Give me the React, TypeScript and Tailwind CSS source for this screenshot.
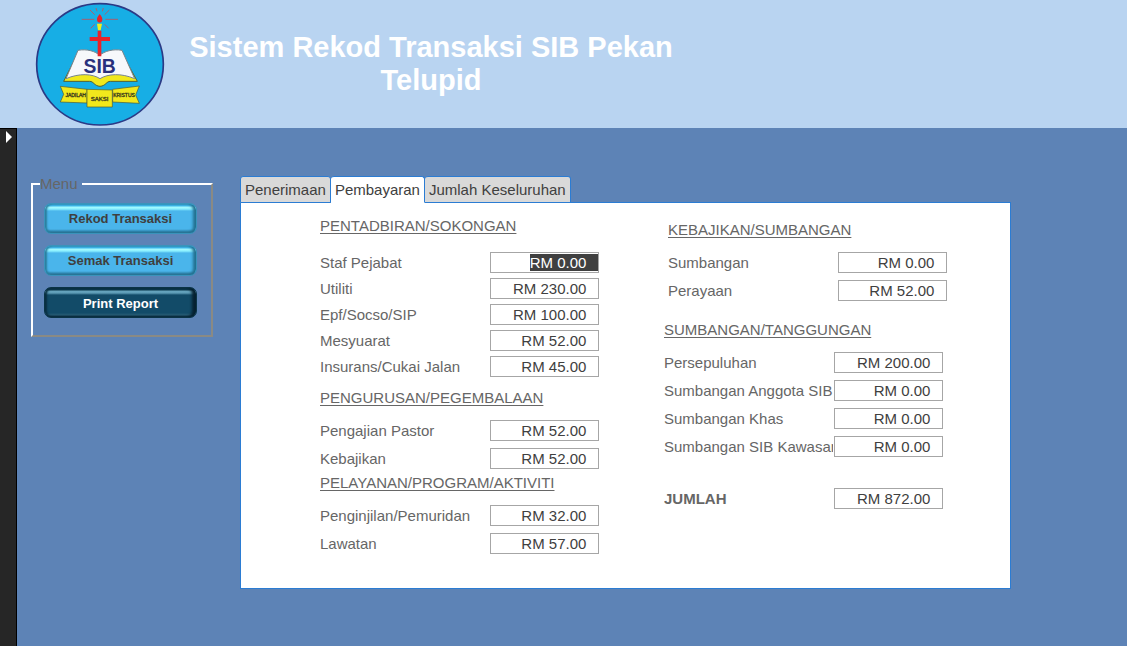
import { useEffect, useRef, useState } from "react";

type Entry = { id: string; label: string; amount: number };
type Group = { title: string; entries: Entry[]; className: string; rowsClassName: string };

// Amounts keep trailing blanks where a closing bracket would go for negatives.
const formatAmount = (value: number) => `RM ${value.toFixed(2)}\u2002\u00a0`;

const leftGroups: Group[] = [
  {
    title: "PENTADBIRAN/SOKONGAN",
    className: "",
    rowsClassName: "mt-[18px] gap-[5px]",
    entries: [
      { id: "staf-pejabat", label: "Staf Pejabat", amount: 0 },
      { id: "utiliti", label: "Utiliti", amount: 230 },
      { id: "epf", label: "Epf/Socso/SIP", amount: 100 },
      { id: "mesyuarat", label: "Mesyuarat", amount: 52 },
      { id: "insurans", label: "Insurans/Cukai Jalan", amount: 45 },
    ],
  },
  {
    title: "PENGURUSAN/PEGEMBALAAN",
    className: "mt-3",
    rowsClassName: "mt-[14px] gap-[7px]",
    entries: [
      { id: "pengajian", label: "Pengajian Pastor", amount: 52 },
      { id: "kebajikan", label: "Kebajikan", amount: 52 },
    ],
  },
  {
    title: "PELAYANAN/PROGRAM/AKTIVITI",
    className: "mt-[5px]",
    rowsClassName: "mt-[14px] gap-[7px]",
    entries: [
      { id: "penginjilan", label: "Penginjilan/Pemuridan", amount: 32 },
      { id: "lawatan", label: "Lawatan", amount: 57 },
    ],
  },
];

const rightGroups: Group[] = [
  {
    title: "KEBAJIKAN/SUMBANGAN",
    className: "pl-1",
    rowsClassName: "mt-[14px] gap-[7px]",
    entries: [
      { id: "sumbangan", label: "Sumbangan", amount: 0 },
      { id: "perayaan", label: "Perayaan", amount: 52 },
    ],
  },
  {
    title: "SUMBANGAN/TANGGUNGAN",
    className: "mt-5",
    rowsClassName: "mt-[14px] gap-[7px]",
    entries: [
      { id: "persepuluhan", label: "Persepuluhan", amount: 200 },
      { id: "anggota", label: "Sumbangan Anggota SIB", amount: 0 },
      { id: "khas", label: "Sumbangan Khas", amount: 0 },
      { id: "kawasan", label: "Sumbangan SIB Kawasan", amount: 0 },
    ],
  },
];

function Logo() {
  return (
    <svg viewBox="15 0 390 384" className="h-32 w-[130px] shrink-0" role="img" aria-label="SIB">
      <ellipse cx="210" cy="193" rx="190" ry="182" fill="#17aee5" stroke="#2b3a86" strokeWidth="5" />
      <g stroke="#a8606f" strokeWidth="3">
        <path d="M155 58h38M226 58h38M180 30l14 14M238 30l-14 14M182 85l12-12M236 85l-12-12M198 24l3 10M220 24l-3 10" />
      </g>
      <path d="M209 42c7 8 10 15 7 22-3 5-11 5-14 0-3-7 0-14 7-22z" fill="#e8232a" />
      <path d="M201 71h15l-4 20h-8z" fill="#f3ee1c" />
      <path d="M136 175L101 244h78c12 0 14 14 31 15 17-1 19-15 31-15h81l-38-69z" fill="#f1e81c" stroke="#53602f" strokeWidth="3" />
      <path d="M144 151L108 236c40-17 79-15 102 0 24-15 64-17 104 0l-38-85c-28-5-53 3-67 15-13-12-37-20-65-15z" fill="#f7f8fb" stroke="#77848c" strokeWidth="3" />
      <path d="M203 92h11v19h26v12h-26v46h-11v-46h-24v-12h24z" fill="#e8232a" />
      <text x="209" y="220" textAnchor="middle" fontSize="58" fontWeight="700" fill="#29307c" fontFamily="Liberation Sans, sans-serif">SIB</text>
      <g fill="#f1e81c" stroke="#4b5734" strokeWidth="2">
        <path d="M91 259l80 9v41l-80-3 10-23z" />
        <path d="M328 258l-80 10v38l80 4-11-25z" />
        <path d="M171 268l76 2v51h-76z" />
      </g>
      <g fill="#3a3a1c" stroke="#3a3a1c" fontFamily="Liberation Sans, sans-serif" textAnchor="middle">
        <text x="137" y="290" fontSize="15">JADILAH</text>
        <text x="209" y="302" fontSize="18">SAKSI</text>
        <text x="282" y="290" fontSize="15">KRISTUS</text>
      </g>
    </svg>
  );
}

const lightButton =
  "border-[#3a93bb] bg-[linear-gradient(#41bdf3_0,#41bdf3_2px,#a9fbff_3px,#8af0ff_5px,#4ab5eb_7px,#4ab5eb_25px,#2c7ba0_28px,#2a6e90_100%)] text-[#3f3f3f] shadow-[inset_2px_0_2px_#2b7f9d,inset_-3px_0_3px_#22708f]";
const darkButton =
  "border-[#0a3346] pt-[3px] bg-[linear-gradient(#0d3a50_0,#0d3a50_2px,#67a5be_3px,#5d9bb5_5px,#124b68_7px,#124b68_25px,#2a5f78_27px,#07293a_29px,#07293a_100%)] text-white shadow-[inset_2px_0_2px_#0a2e40,inset_-4px_0_3px_#062130]";

function MenuButton({ label, dark }: { label: string; dark?: boolean }) {
  return (
    <button
      type="button"
      className={`h-[31px] w-full rounded-[7px] border text-[13px] leading-4 font-bold ${dark ? darkButton : lightButton}`}
    >
      {label}
    </button>
  );
}

function Row({ entry, bold, selected }: { entry: Entry; bold?: boolean; selected?: boolean }) {
  const ref = useRef<HTMLInputElement>(null);
  useEffect(() => {
    if (selected) {
      ref.current?.focus();
      ref.current?.select();
    }
  }, [selected]);
  return (
    <div className="flex h-[21px] items-center">
      <label
        htmlFor={entry.id}
        className={`mr-px w-[169px] shrink-0 overflow-hidden whitespace-nowrap text-[#666] ${bold ? "font-bold" : ""}`}
      >
        {entry.label}
      </label>
      <input
        ref={ref}
        id={entry.id}
        type="text"
        defaultValue={formatAmount(entry.amount)}
        className="h-[21px] w-[109px] border border-[#a6a6a6] bg-white text-right text-[#404040] outline-none selection:bg-[#404040] selection:text-white"
      />
    </div>
  );
}

function Section({ group, selectedId }: { group: Group; selectedId?: string }) {
  return (
    <section className={group.className}>
      <h2 className="text-[#666] underline underline-offset-2">{group.title}</h2>
      <div className={`flex flex-col ${group.rowsClassName}`}>
        {group.entries.map((entry) => (
          <Row key={entry.id} entry={entry} selected={entry.id === selectedId} />
        ))}
      </div>
    </section>
  );
}

const tabs = ["Penerimaan", "Pembayaran", "Jumlah Keseluruhan"];

export default function App() {
  const [active, setActive] = useState("Pembayaran");
  return (
    <div className="flex min-h-screen flex-col bg-[#5d83b6] font-['Liberation_Sans',Arial,sans-serif] text-[15px] leading-[17px]">
      <header className="flex h-32 items-center bg-[#b9d4f1] pl-[35px]">
        <Logo />
        <h1 className="ml-2 max-w-[520px] pr-1 text-center text-[29px] leading-[33px] font-bold text-white">
          Sistem Rekod Transaksi SIB Pekan Telupid
        </h1>
      </header>

      <div className="flex grow">
        <div className="w-[17px] shrink-0 border-t border-r border-black bg-[#262626] pt-[2px] pl-[6px]">
          <svg viewBox="0 0 6 12" className="h-3 w-[6px]" aria-hidden="true">
            <path d="M0 0l6 6-6 6z" fill="#fff" />
          </svg>
        </div>

        <main className="flex grow items-start gap-[27px] pt-12 pr-[116px] pb-14 pl-[14px]">
          <fieldset className="w-[182px] shrink-0 border-2 border-t-white border-r-[#8a8a84] border-b-[#8a8a84] border-l-white pt-[11px] pr-[14px] pb-[17px] pl-[11px]">
            <legend className="-ml-1 w-[42px] leading-4 text-[#666]">Menu</legend>
            <div className="flex flex-col gap-[11px]">
              <MenuButton label="Rekod Transaksi" />
              <MenuButton label="Semak Transaksi" />
              <MenuButton label="Print Report" dark />
            </div>
          </fieldset>

          <div className="min-w-0 grow">
            <div role="tablist" className="flex">
              {tabs.map((tab) => (
                <button
                  key={tab}
                  type="button"
                  role="tab"
                  aria-selected={tab === active}
                  onClick={() => setActive(tab)}
                  className={`h-[27px] rounded-t-[3px] border-t border-r border-b border-[#2b7cd3] px-1 text-[#404040] first:border-l ${
                    tab === active ? "border-b-white bg-white" : "bg-[#d9d9d9]"
                  }`}
                >
                  {tab}
                </button>
              ))}
              <div className="grow border-b border-[#2b7cd3]" />
            </div>
            <div
              role="tabpanel"
              className="flex gap-[65px] border border-t-0 border-[#2b7cd3] bg-white pt-[14px] pb-[34px] pl-[79px]"
            >
              <div className="flex flex-col">
                {leftGroups.map((group) => (
                  <Section key={group.title} group={group} selectedId="staf-pejabat" />
                ))}
              </div>
              <div className="flex flex-col pt-1">
                {rightGroups.map((group) => (
                  <Section key={group.title} group={group} />
                ))}
                <div className="mt-[31px]">
                  <Row entry={{ id: "jumlah", label: "JUMLAH", amount: 872 }} bold />
                </div>
              </div>
            </div>
          </div>
        </main>
      </div>
    </div>
  );
}
